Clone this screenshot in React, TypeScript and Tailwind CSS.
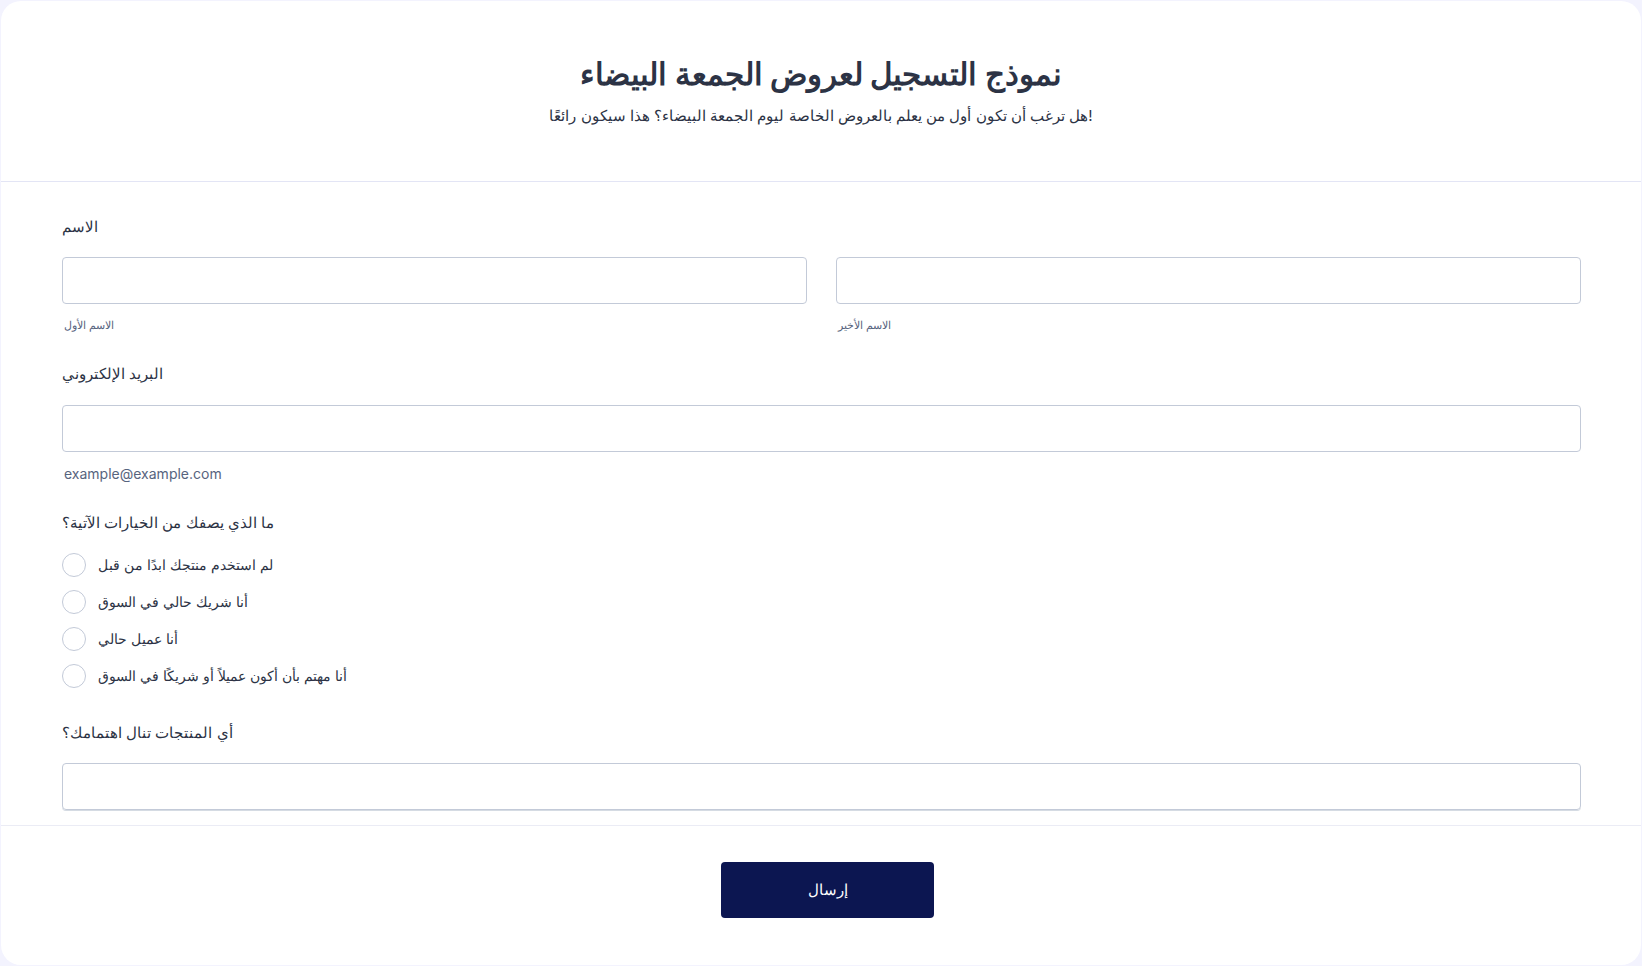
import { useState } from "react";

const options = [
  "لم استخدم منتجك ابدًا من قبل",
  "أنا شريك حالي في السوق",
  "أنا عميل حالي",
  "أنا مهتم بأن أكون عميلاً أو شريكًا في السوق",
];

export default function App() {
  const [choice, setChoice] = useState("");

  return (
    <div className="min-h-screen bg-[#f3f3fe] p-px font-['Inter','Liberation_Sans',sans-serif] text-[#2c3345]">
      <div className="flex h-[964px] flex-col rounded-[20px] bg-white">
        {/* header */}
        <div className="flex h-[181px] flex-col items-center border-b border-[#e3e5f5] pt-[52px]">
          <h1 className="text-[31px] font-bold leading-[42px]">نموذج التسجيل لعروض الجمعة البيضاء</h1>
          <p className="mt-[9px] text-[15px] leading-6">هل ترغب أن تكون أول من يعلم بالعروض الخاصة ليوم الجمعة البيضاء؟ هذا سيكون رائعًا!</p>
        </div>

        {/* fields */}
        <div className="border-b border-[#ebecf5] pb-[15px] pl-[61px] pr-[60px] pt-[33px]">
          <label className="block text-[15px] leading-6">الاسم</label>
          <div className="mt-[18px] grid grid-cols-2 gap-[29px]">
            <div>
              <input className="h-[47px] w-full rounded-[4px] border border-[#c3cad8] px-3 outline-none" />
              <div className="mt-[13px] px-[2px] text-[11px] leading-4 text-[#57647e]">الاسم الأول</div>
            </div>
            <div>
              <input className="h-[47px] w-full rounded-[4px] border border-[#c3cad8] px-3 outline-none" />
              <div className="mt-[13px] px-[2px] text-[11px] leading-4 text-[#57647e]">الاسم الأخير</div>
            </div>
          </div>

          <label className="mt-[29px] block text-[15px] leading-6">البريد الإلكتروني</label>
          <input className="mt-[19px] h-[47px] w-full rounded-[4px] border border-[#c3cad8] px-3 outline-none" />
          <div className="mt-[12px] px-[2px] text-[14px] leading-5 text-[#57647e]">example@example.com</div>

          <label className="mt-[27px] block text-[15px] leading-6">ما الذي يصفك من الخيارات الآتية؟</label>
          <div className="mt-[11px] flex flex-col">
            {options.map((opt) => (
              <label key={opt} className="flex h-[37px] cursor-pointer items-center gap-3" onClick={() => setChoice(opt)}>
                <span className="flex h-6 w-6 items-center justify-center rounded-full border-[1.5px] border-[#c3cad8]">
                  {choice === opt && <span className="h-3 w-3 rounded-full bg-[#0c1651]" />}
                </span>
                <span className="text-[14px]">{opt}</span>
              </label>
            ))}
          </div>

          <label className="mt-[27px] block text-[15px] leading-6">أي المنتجات تنال اهتمامك؟</label>
          <input className="mt-[18px] h-[47px] w-full rounded-[4px] border border-[#c3cad8] px-3 shadow-[0_1px_0_#d5dbe3] outline-none" />
        </div>

        {/* footer */}
        <div className="flex justify-center pl-[13px] pt-[36px]">
          <button className="h-[56px] w-[213px] rounded-[4px] bg-[#0c1651] text-[15px] text-white">إرسال</button>
        </div>
      </div>
    </div>
  );
}
